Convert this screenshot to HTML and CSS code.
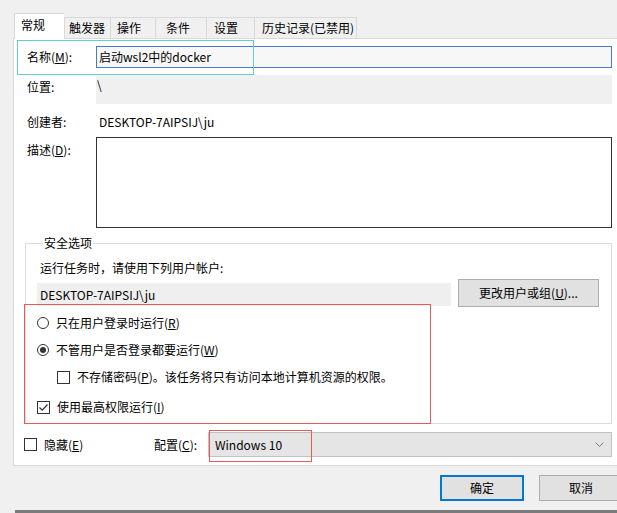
FILE: index.html
```html
<!DOCTYPE html>
<html>
<head>
	<meta charset="utf-8">
	<title>常规</title>
	<link rel="stylesheet" href="styles.css">
</head>
<body>
	<div class="dialog">
		<!-- 选项卡 -->
		<div class="tabs">
			<div class="tab active">常规</div>
			<div class="tab t-trigger">触发器</div>
			<div class="tab t-action">操作</div>
			<div class="tab t-cond">条件</div>
			<div class="tab t-set">设置</div>
			<div class="tab t-hist">历史记录(已禁用)</div>
		</div>

		<div class="panel">
			<div class="row name-row">
				<div class="lbl">名称(<u>M</u>):</div>
				<div class="field name-field">启动wsl2中的docker</div>
				<div class="mark-cyan"></div>
			</div>
			<div class="row loc-row">
				<div class="lbl">位置:</div>
				<div class="field loc-field">\</div>
			</div>
			<div class="row author-row">
				<div class="lbl">创建者:</div>
				<div class="author">DESKTOP-7AIPSIJ\ju</div>
			</div>
			<div class="row desc-row">
				<div class="lbl">描述(<u>D</u>):</div>
				<div class="desc"></div>
			</div>

			<fieldset class="group">
				<legend>安全选项</legend>
				<div class="hint">运行任务时，请使用下列用户帐户:</div>
				<div class="account">
					<div class="account-field">DESKTOP-7AIPSIJ\ju</div>
					<div class="btn change">更改用户或组(<u>U</u>)...</div>
				</div>
				<div class="mark-red">
					<div class="opt">
						<i class="radio"></i>
						<span>只在用户登录时运行(<u>R</u>)</span>
					</div>
					<div class="opt">
						<i class="radio on"></i>
						<span>不管用户是否登录都要运行(<u>W</u>)</span>
					</div>
					<div class="opt sub">
						<i class="check"></i>
						<span>不存储密码(<u>P</u>)。该任务将只有访问本地计算机资源的权限。</span>
					</div>
					<div class="opt last">
						<i class="check">
							<svg width="11" height="11" viewBox="0 0 11 11"><polyline points="1.5,5.5 4.2,8.2 9.5,2.5" fill="none" stroke="#333" stroke-width="1.2"/></svg>
						</i>
						<span>使用最高权限运行(<u>I</u>)</span>
					</div>
				</div>
			</fieldset>

			<div class="bottom-row">
				<div class="hide">
					<i class="check"></i>
					<span>隐藏(<u>E</u>)</span>
				</div>
				<div class="cfg-label">配置(<u>C</u>):</div>
				<div class="select">
					<span>Windows 10</span>
					<svg class="chevron" width="9" height="5" viewBox="0 0 9 5"><polyline points="0.5,0.5 4.5,4.5 8.5,0.5" fill="none" stroke="#7a7a7a" stroke-width="1"/></svg>
					<div class="mark-red-small"></div>
				</div>
			</div>
		</div>

		<div class="buttons">
			<div class="btn ok">确定</div>
			<div class="btn">取消</div>
		</div>
		<div class="edge"></div>
	</div>
</body>
</html>
```

FILE: styles.css
```css
* {
	margin: 0;
	padding: 0;
	box-sizing: border-box;
}
body {
	width: 617px;
	height: 513px;
	overflow: hidden;
	background: #f0f0f0;
	color: #000;
	font: 12px/16px "Noto Sans CJK SC", "Microsoft YaHei", sans-serif;
}
u {
	text-decoration: underline;
	text-underline-offset: 1px;
}
.dialog {
	width: 617px;
	height: 513px;
}

/* 选项卡 */
.tabs {
	display: flex;
	align-items: flex-end;
	height: 38px;
	padding-left: 14px;
}
.tab {
	height: 21px;
	padding-top: 2px;
	border-top: 1px solid #d9d9d9;
	border-left: 1px solid #d9d9d9;
	background: #f0f0f0;
	white-space: nowrap;
}
.tab.active {
	width: 50px;
	height: 26px;
	margin-bottom: -1px;
	padding: 3px 0 0 6px;
	background: #fff;
	position: relative;
	z-index: 1;
}
.t-trigger { width: 46px; padding-left: 4px; }
.t-action { width: 45px; padding-left: 6px; }
.t-cond { width: 51px; padding-left: 10px; }
.t-set { width: 48px; padding-left: 7px; }
.t-hist {
	width: 103px;
	padding-left: 7px;
	border-right: 1px solid #d9d9d9;
}

/* 内容面板 */
.panel {
	width: 612px;
	height: 428px;
	margin-left: 13px;
	padding: 0 12px 0 13px;
	background: #fff;
	border: 1px solid #d9d9d9;
}
.row {
	display: flex;
	position: relative;
}
.lbl {
	width: 69px;
	flex-shrink: 0;
}
.field {
	flex: 1;
}
.name-row {
	height: 22px;
	margin-top: 7px;
}
.name-row .lbl {
	line-height: 22px;
}
.name-field {
	border: 1px solid #4a7ad0;
	background: #f7f7f7;
	line-height: 20px;
	padding-left: 2px;
}
.mark-cyan {
	position: absolute;
	left: -10px;
	top: -6px;
	width: 237px;
	height: 35px;
	border: 1px solid #62d0d2;
}
.loc-row {
	height: 29px;
	margin-top: 7px;
}
.loc-row .lbl {
	padding-top: 4px;
}
.loc-field {
	background: #f0f0f0;
	padding: 2px 0 0 1px;
}
.author-row {
	height: 24px;
	margin-top: 6px;
	line-height: 24px;
}
.author {
	padding-left: 3px;
}
.desc-row {
	margin-top: 3px;
}
.desc-row .lbl {
	padding-top: 5px;
}
.desc {
	flex: 1;
	height: 91px;
	border: 1px solid #333;
	background: #fff;
}

/* 安全选项 */
.group {
	width: 587px;
	min-width: 0;
	margin: 7px 0 0 -2px;
	padding: 0 0 0 11px;
	border: 1px solid #dcdcdc;
}
.group legend {
	margin-left: 6px;
	padding: 0 1px;
}
.hint {
	margin-top: 9px;
	padding-left: 3px;
}
.account {
	display: flex;
	height: 28px;
	margin-top: 3px;
}
.account-field {
	width: 414px;
	height: 23px;
	margin-top: 4px;
	padding-left: 3px;
	line-height: 23px;
	background: #efefef;
}
.btn {
	height: 26px;
	line-height: 24px;
	text-align: center;
	background: #e1e1e1;
	border: 1px solid #adadad;
}
.btn.change {
	width: 141px;
	height: 28px;
	line-height: 26px;
	margin-left: 7px;
}
.mark-red {
	position: relative;
	width: 407px;
	margin: -3px 0 -1px -13px;
	padding: 10px 0 8px 12px;
	border: 1px solid #e65a5a;
}
.opt {
	display: flex;
	align-items: center;
	height: 16px;
	margin-bottom: 11px;
}
.opt.sub {
	margin-left: 20px;
	margin-bottom: 14px;
}
.opt.last {
	margin-bottom: 0;
}
.opt span {
	margin-left: 7px;
}
.radio {
	width: 12px;
	height: 12px;
	border: 1px solid #333;
	border-radius: 50%;
	background: #fff;
	display: flex;
	align-items: center;
	justify-content: center;
}
.radio.on::after {
	content: "";
	width: 6px;
	height: 6px;
	border-radius: 50%;
	background: #333;
}
.check {
	width: 13px;
	height: 13px;
	border: 1px solid #333;
	background: #fff;
	display: flex;
	align-items: center;
	justify-content: center;
}

/* 底部配置 */
.bottom-row {
	display: flex;
	align-items: center;
	height: 25px;
	margin: 8px 0 0 -3px;
}
.hide {
	display: flex;
	align-items: center;
	width: 130px;
}
.hide span {
	margin-left: 7px;
}
.cfg-label {
	width: 54px;
}
.select {
	position: relative;
	flex: 1;
	height: 25px;
	display: flex;
	align-items: center;
	justify-content: space-between;
	padding: 0 7px 0 6px;
	background: #e5e5e5;
	border: 1px solid #c2c2c2;
}
.mark-red-small {
	position: absolute;
	left: 0;
	top: -3px;
	width: 103px;
	height: 32px;
	border: 1px solid #e65a5a;
}

/* 按钮 */
.buttons {
	display: flex;
	gap: 15px;
	margin-top: 9px;
	padding-left: 440px;
}
.buttons .btn {
	width: 84px;
	flex-shrink: 0;
}
.buttons .btn.ok {
	border: 2px solid #0078d7;
	line-height: 22px;
}
.edge {
	height: 3px;
	margin: 9px 0 0 15px;
	background: #7b7b7b;
}
```
